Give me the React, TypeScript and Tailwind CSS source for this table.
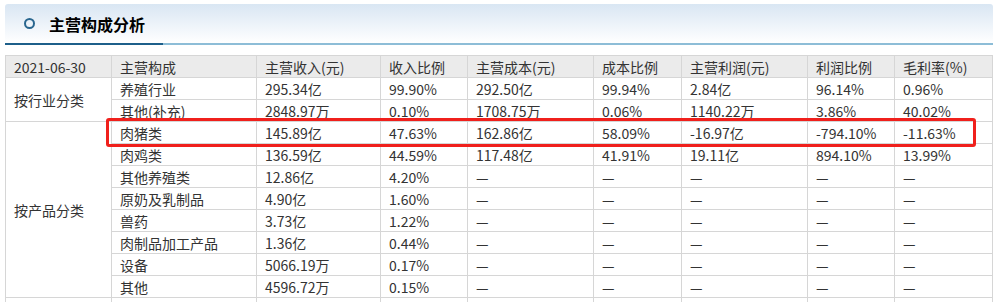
import React from "react";

type Row = { cat?: string; span?: number; cells: string[] };

const cols = [106, 145, 124, 87, 126, 88, 126, 87, 98];

const heads = [
  "2021-06-30",
  "主营构成",
  "主营收入(元)",
  "收入比例",
  "主营成本(元)",
  "成本比例",
  "主营利润(元)",
  "利润比例",
  "毛利率(%)",
];

const D = "—";

const rows: Row[] = [
  { cat: "按行业分类", span: 2, cells: ["养殖行业", "295.34亿", "99.90%", "292.50亿", "99.94%", "2.84亿", "96.14%", "0.96%"] },
  { cells: ["其他(补充)", "2848.97万", "0.10%", "1708.75万", "0.06%", "1140.22万", "3.86%", "40.02%"] },
  { cat: "按产品分类", span: 8, cells: ["肉猪类", "145.89亿", "47.63%", "162.86亿", "58.09%", "-16.97亿", "-794.10%", "-11.63%"] },
  { cells: ["肉鸡类", "136.59亿", "44.59%", "117.48亿", "41.91%", "19.11亿", "894.10%", "13.99%"] },
  { cells: ["其他养殖类", "12.86亿", "4.20%", D, D, D, D, D] },
  { cells: ["原奶及乳制品", "4.90亿", "1.60%", D, D, D, D, D] },
  { cells: ["兽药", "3.73亿", "1.22%", D, D, D, D, D] },
  { cells: ["肉制品加工产品", "1.36亿", "0.44%", D, D, D, D, D] },
  { cells: ["设备", "5066.19万", "0.17%", D, D, D, D, D] },
  { cells: ["其他", "4596.72万", "0.15%", D, D, D, D, D] },
  { cat: "按地区分类", span: 2, cells: ["其他(补充)", "2848.97万", "0.10%", "1708.75万", "0.06%", "1140.22万", "3.86%", "40.02%"] },
];

const cell = "h-[22px] border border-[#d6d6d6] pl-[8px] pr-1 py-0 text-left align-middle whitespace-nowrap leading-[20px]";

export default function App() {
  return (
    <div className="relative w-[998px] h-[302px] overflow-hidden bg-white text-[14px] text-[#333] font-['Noto_Sans_CJK_SC',sans-serif]">
      {/* Title bar */}
      <div className="mx-[5px] mt-[4px] w-[988px]">
        <div className="flex items-center h-[39px] rounded-t-[3px] bg-gradient-to-b from-[#d9e6f3] to-white">
          <span className="ml-[19px] w-[11px] h-[11px] rounded-full border-[2px] border-[#29668f]" />
          <span className="ml-[14px] text-[16px] font-bold text-black leading-none">主营构成分析</span>
        </div>
        <div className="flex h-[2px]">
          <div className="w-[158px] bg-[#1d5f8a]" />
          <div className="flex-1 bg-[#8dbdd7]" />
        </div>
      </div>

      {/* Table */}
      <table className="ml-[5px] mt-[10px] border-collapse table-fixed w-[987px]">
        <colgroup>
          {cols.map((w, i) => (
            <col key={i} style={{ width: w }} />
          ))}
        </colgroup>
        <thead>
          <tr className="bg-[#ebebeb]">
            {heads.map((h) => (
              <th key={h} className={cell + " font-normal"}>
                {h}
              </th>
            ))}
          </tr>
        </thead>
        <tbody>
          {rows.map((r, i) => (
            <tr key={i}>
              {r.cat && (
                <td rowSpan={r.span} className={cell + " align-middle"}>
                  {r.cat}
                </td>
              )}
              {r.cells.map((c, j) => (
                <td key={j} className={cell}>
                  {c}
                </td>
              ))}
            </tr>
          ))}
        </tbody>
      </table>

      {/* highlight box */}
      <div className="absolute left-[106px] top-[118px] w-[870px] h-[29px] border-[3px] border-[#f0201c] rounded-[3px] pointer-events-none" />
    </div>
  );
}
